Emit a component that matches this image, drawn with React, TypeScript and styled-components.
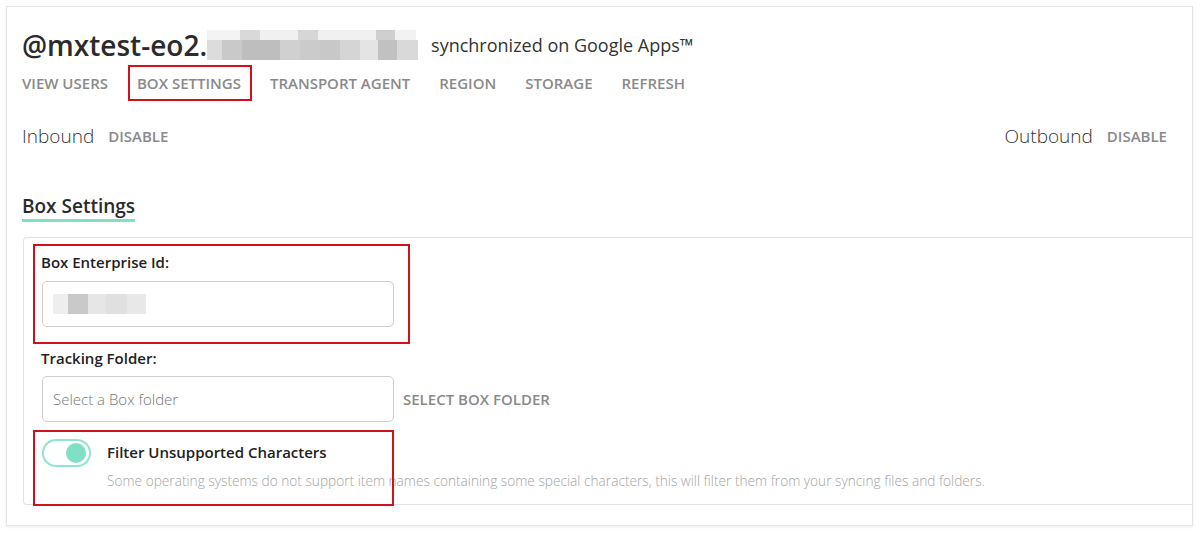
import React from 'react';
import styled, { createGlobalStyle } from 'styled-components';

const GlobalStyle = createGlobalStyle`
  body {
    margin: 0;
    background: #fff;
    font-family: "Open Sans", "Liberation Sans", sans-serif;
    color: #333;
  }
`;

const Page = styled.div`
  padding: 6px 7px 7px 6px;
`;

const Card = styled.div`
  border: 1px solid #e4e4e4;
  box-shadow: 0 1px 3px rgba(0, 0, 0, 0.08);
  padding: 22px 0 20px 15px;
  overflow: hidden;
`;

const TitleRow = styled.div`
  display: flex;
  align-items: center;
  height: 32px;
`;

const Domain = styled.h1`
  margin: 0;
  font-size: 28px;
  font-weight: 600;
  color: #2b2b2b;
  line-height: 32px;
`;

const Redacted = styled.div`
  display: flex;
  flex-direction: column;
  margin: 0 13px 0 0;
`;

const RedactRow = styled.div`
  display: flex;
`;

const Tile = styled.span<{ $shade: string; $w: number; $h: number }>`
  display: block;
  width: ${(p) => p.$w}px;
  height: ${(p) => p.$h}px;
  background: ${(p) => p.$shade};
`;

const Synced = styled.span`
  font-size: 18px;
  font-weight: 400;
  color: #333;
`;

const Nav = styled.nav`
  display: flex;
  gap: 29px;
  margin-top: 12px;
`;

const NavItem = styled.a<{ $active?: boolean }>`
  position: relative;
  font-size: 15px;
  line-height: 20px;
  font-weight: 600;
  color: #8a8a8a;
  text-transform: uppercase;
  cursor: pointer;

  ${(p) =>
    p.$active &&
    `
    &::after {
      content: '';
      position: absolute;
      top: -8px;
      bottom: -8px;
      left: -9px;
      right: -11px;
      border: 2px solid #d0111b;
    }
  `}
`;

const StatusRow = styled.div`
  display: flex;
  justify-content: space-between;
  align-items: center;
  margin-top: 30px;
  padding-right: 25px;
`;

const StatusGroup = styled.div`
  display: flex;
  align-items: center;
  gap: 14px;
`;

const StatusLabel = styled.span`
  font-size: 19px;
  font-weight: 300;
  line-height: 26px;
  color: #333;
`;

const TextButton = styled.a`
  font-size: 15px;
  font-weight: 600;
  color: #8a8a8a;
  text-transform: uppercase;
  cursor: pointer;
`;

const SectionTitle = styled.h2`
  display: inline-block;
  margin: 44px 0 0;
  font-size: 19px;
  font-weight: 600;
  line-height: 26px;
  color: #2b2b2b;
  border-bottom: 3px solid #7fe0c6;
`;

const Panel = styled.div`
  margin-top: 15px;
  margin-left: 1px;
  margin-right: -2px;
  border: 1px solid #e2e2e2;
  border-right: none;
  border-radius: 4px 0 0 4px;
  padding: 14px 0 14px 17px;
`;

const Field = styled.div<{ $gap?: number }>`
  position: relative;
  margin-top: ${(p) => p.$gap ?? 0}px;
`;

const Label = styled.label`
  display: block;
  font-size: 15px;
  font-weight: 600;
  line-height: 20px;
  color: #222;
`;

const InputRow = styled.div<{ $gap?: number }>`
  display: flex;
  align-items: center;
  gap: 9px;
  margin-top: ${(p) => p.$gap ?? 8}px;
`;

const InputBox = styled.div`
  box-sizing: border-box;
  width: 352px;
  height: 46px;
  margin-left: 1px;
  border: 1px solid #cfcfcf;
  border-radius: 5px;
  display: flex;
  align-items: center;
  padding-left: 10px;
  font-size: 15px;
  font-weight: 300;
  color: #777;
`;

const Highlight = styled.div<{ $top: number; $left: number; $w: number; $h: number }>`
  position: absolute;
  top: ${(p) => p.$top}px;
  left: ${(p) => p.$left}px;
  width: ${(p) => p.$w}px;
  height: ${(p) => p.$h}px;
  box-sizing: border-box;
  border: 2px solid #d0111b;
  pointer-events: none;
`;

const ToggleRow = styled.div`
  position: relative;
  display: flex;
  align-items: flex-start;
  gap: 16px;
  margin-top: 17px;
  margin-left: 1px;
`;

const Track = styled.div<{ $on: boolean }>`
  box-sizing: border-box;
  width: 49px;
  height: 28px;
  flex: none;
  border: 2px solid #8fe5cf;
  border-radius: 14px;
  background: #fff;
  display: flex;
  align-items: center;
  justify-content: ${(p) => (p.$on ? 'flex-end' : 'flex-start')};
  padding: 0 3px;
`;

const Knob = styled.span`
  width: 20px;
  height: 20px;
  border-radius: 50%;
  background: #7fe0c6;
`;

const ToggleText = styled.div`
  padding-top: 3px;
`;

const ToggleTitle = styled.div`
  font-size: 15px;
  font-weight: 600;
  line-height: 20px;
  color: #222;
`;

const Hint = styled.div`
  margin-top: 10px;
  font-size: 13.7px;
  font-weight: 300;
  line-height: 18px;
  color: #a4a4a4;
`;

const navItems = ['View users', 'Box settings', 'Transport agent', 'Region', 'Storage', 'Refresh'];

const domainTop = [
  ['#f3f3f3', 33], ['#d9d9d9', 20], ['#f0f0f0', 38], ['#d6d6d6', 20], ['#f0f0f0', 58], ['#cfcfcf', 19], ['#f2f2f2', 21],
] as const;
const domainBottom = [
  ['#dcdcdc', 15], ['#c9c9c9', 20], ['#bebebe', 38], ['#d0d0d0', 20], ['#cbcbcb', 20], ['#c8c8c8', 20],
  ['#d5d5d5', 20], ['#e4e4e4', 18], ['#c1c1c1', 19], ['#d9d9d9', 21],
] as const;
const idTiles = [
  ['#eeeeee', 15], ['#c9c9c9', 20], ['#e6e6e6', 18], ['#e0e0e0', 21], ['#e8e8e8', 19],
] as const;

const App: React.FC = () => {
  return (
    <Page>
      <GlobalStyle />
      <Card>
        <TitleRow>
          <Domain>@mxtest-eo2.</Domain>
          <Redacted>
            <RedactRow>
              {domainTop.map(([c, w], i) => (
                <Tile key={i} $shade={c} $w={w} $h={10} />
              ))}
            </RedactRow>
            <RedactRow>
              {domainBottom.map(([c, w], i) => (
                <Tile key={i} $shade={c} $w={w} $h={20} />
              ))}
            </RedactRow>
          </Redacted>
          <Synced>synchronized on Google Apps™</Synced>
        </TitleRow>

        <Nav>
          {navItems.map((item) => (
            <NavItem key={item} $active={item === 'Box settings'}>
              {item}
            </NavItem>
          ))}
        </Nav>

        <StatusRow>
          <StatusGroup>
            <StatusLabel>Inbound</StatusLabel>
            <TextButton>Disable</TextButton>
          </StatusGroup>
          <StatusGroup>
            <StatusLabel>Outbound</StatusLabel>
            <TextButton>Disable</TextButton>
          </StatusGroup>
        </StatusRow>

        <SectionTitle>Box Settings</SectionTitle>

        <Panel>
          <Field>
            <Highlight $top={-8} $left={-8} $w={377} $h={100} />
            <Label>Box Enterprise Id:</Label>
            <InputRow $gap={9}>
              <InputBox>
                <RedactRow>
                  {idTiles.map(([c, w], i) => (
                    <Tile key={i} $shade={c} $w={w} $h={20} />
                  ))}
                </RedactRow>
              </InputBox>
            </InputRow>
          </Field>

          <Field $gap={21}>
            <Label>Tracking Folder:</Label>
            <InputRow>
              <InputBox>Select a Box folder</InputBox>
              <TextButton as="span">Select Box folder</TextButton>
            </InputRow>
          </Field>

          <ToggleRow>
            <Highlight $top={-9} $left={-9} $w={361} $h={76} />
            <Track $on>
              <Knob />
            </Track>
            <ToggleText>
              <ToggleTitle>Filter Unsupported Characters</ToggleTitle>
              <Hint>
                Some operating systems do not support item names containing some special characters, this will
                filter them from your syncing files and folders.
              </Hint>
            </ToggleText>
          </ToggleRow>
        </Panel>
      </Card>
    </Page>
  );
};

export default App;
